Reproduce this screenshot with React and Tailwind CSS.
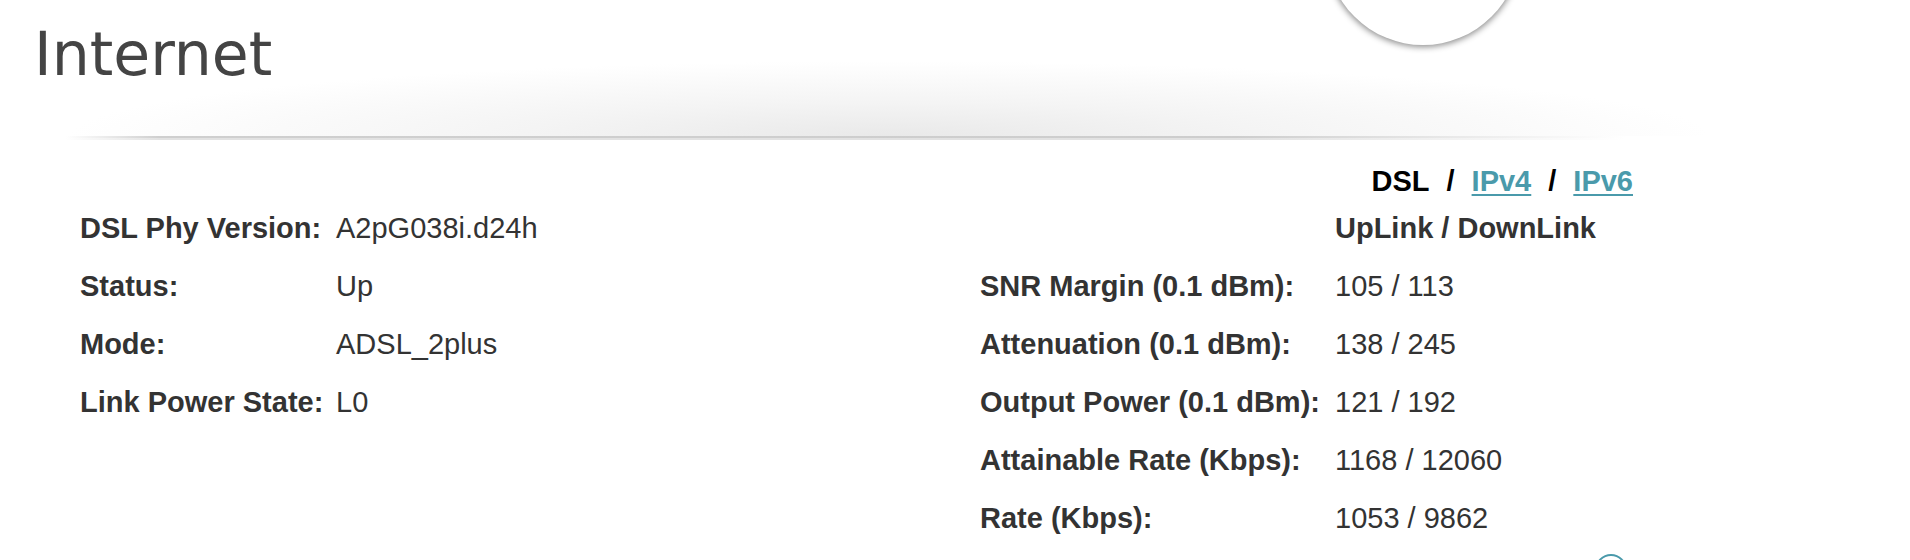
import React from 'react';

const leftRows = [
  { label: 'DSL Phy Version:', value: 'A2pG038i.d24h' },
  { label: 'Status:', value: 'Up' },
  { label: 'Mode:', value: 'ADSL_2plus' },
  { label: 'Link Power State:', value: 'L0' },
];

const rightRows = [
  { label: 'SNR Margin (0.1 dBm):', value: '105 / 113' },
  { label: 'Attenuation (0.1 dBm):', value: '138 / 245' },
  { label: 'Output Power (0.1 dBm):', value: '121 / 192' },
  { label: 'Attainable Rate (Kbps):', value: '1168 / 12060' },
  { label: 'Rate (Kbps):', value: '1053 / 9862' },
];

const Row = ({ label, value, labelWidth }) => (
  <div className="flex h-[58px] items-center leading-[58px]">
    <span className={`${labelWidth} shrink-0 font-bold text-[#333333]`}>{label}</span>
    <span className="text-[#333333]">{value}</span>
  </div>
);

const App = () => {
  return (
    <div className="relative h-[560px] w-full overflow-hidden bg-white font-['Liberation_Sans',Arial,sans-serif] text-[29px]">
      {/* logo bubble at top */}
      <div className="absolute left-[1326px] top-[-149px] h-[194px] w-[194px] rounded-full bg-white shadow-[0_1px_6px_1px_rgba(0,0,0,0.45)]" />

      {/* header */}
      <div className="h-[136px] bg-[radial-gradient(ellipse_820px_75px_at_890px_136px,#e9e9e9_0%,#f4f4f4_45%,#ffffff_100%)]">
        <h1 className="pl-[34px] pt-[24px] font-['DejaVu_Sans',Verdana,sans-serif] text-[60px] font-normal leading-[60px] text-[#444444]">
          Internet
        </h1>
      </div>
      <div className="ml-[66px] h-[2px] w-[1560px] bg-[linear-gradient(to_right,rgba(200,200,200,0),#cfcfcf_6%,#cdcdcd_75%,rgba(210,210,210,0))]" />
      <div className="ml-[66px] h-[2px] w-[1560px] bg-[linear-gradient(to_right,rgba(225,225,225,0),#e2e2e2_6%,#e2e2e2_75%,rgba(230,230,230,0))]" />

      {/* tabs */}
      <div className="mt-[23px] flex h-[36px] items-center justify-end gap-[17px] pr-[277px] font-bold leading-[36px]">
        <span className="text-black">DSL</span>
        <span className="text-black">/</span>
        <a href="#" className="text-[#4a9aab] underline decoration-2 underline-offset-[3px]">IPv4</a>
        <span className="text-black">/</span>
        <a href="#" className="text-[#4a9aab] underline decoration-2 underline-offset-[3px]">IPv6</a>
      </div>

      {/* tables */}
      <div className="flex">
        <div className="ml-[80px] w-[900px] shrink-0">
          {leftRows.map((r) => (
            <Row key={r.label} label={r.label} value={r.value} labelWidth="w-[256px]" />
          ))}
        </div>
        <div>
          <div className="flex h-[58px] items-center leading-[58px]">
            <span className="w-[355px] shrink-0" />
            <span className="font-bold text-[#333333]">UpLink / DownLink</span>
          </div>
          {rightRows.map((r) => (
            <Row key={r.label} label={r.label} value={r.value} labelWidth="w-[355px]" />
          ))}
        </div>
      </div>

      {/* help icon peeking at bottom */}
      <div className="absolute left-[1595px] top-[554px] h-[32px] w-[32px] rounded-full border-2 border-[#4a9aab]" />
    </div>
  );
};

export default App;
